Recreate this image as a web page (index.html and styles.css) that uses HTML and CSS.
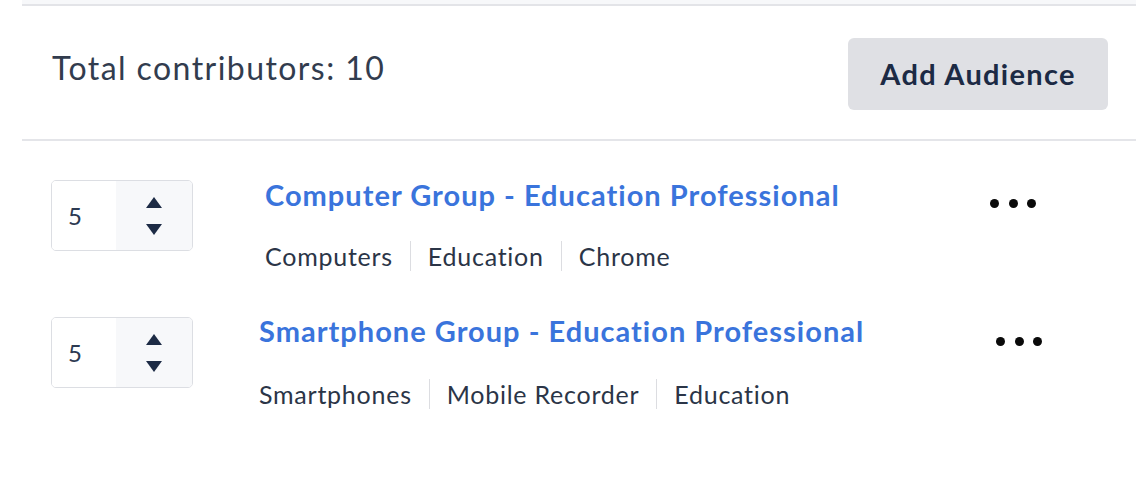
FILE: index.html
```html
<!DOCTYPE html>
<html lang="en">
<head>
<meta charset="utf-8">
<title>Audiences</title>
<link rel="stylesheet" href="styles.css">
</head>
<body>
<div class="panel">
  <div class="topband"></div>
  <div class="header">
    <div class="total">Total contributors: 10</div>
    <button class="add-btn" type="button">Add Audience</button>
  </div>
  <div class="list">
    <div class="row row--a">
      <div class="spinner">
        <div class="spinner-value">5</div>
        <div class="spinner-arrows">
          <svg width="16" height="38" viewBox="0 0 16 38" aria-hidden="true">
            <polygon points="8,0 16,11 0,11" fill="#1d2b45"/>
            <polygon points="0,27 16,27 8,38" fill="#1d2b45"/>
          </svg>
        </div>
      </div>
      <div class="content">
        <div class="title">Computer Group - Education Professional</div>
        <div class="tags">
          <span class="tag">Computers</span>
          <span class="tag">Education</span>
          <span class="tag">Chrome</span>
        </div>
      </div>
      <div class="dots"><span></span><span></span><span></span></div>
    </div>
    <div class="row row--b">
      <div class="spinner">
        <div class="spinner-value">5</div>
        <div class="spinner-arrows">
          <svg width="16" height="38" viewBox="0 0 16 38" aria-hidden="true">
            <polygon points="8,0 16,11 0,11" fill="#1d2b45"/>
            <polygon points="0,27 16,27 8,38" fill="#1d2b45"/>
          </svg>
        </div>
      </div>
      <div class="content">
        <div class="title">Smartphone Group - Education Professional</div>
        <div class="tags">
          <span class="tag">Smartphones</span>
          <span class="tag">Mobile Recorder</span>
          <span class="tag">Education</span>
        </div>
      </div>
      <div class="dots"><span></span><span></span><span></span></div>
    </div>
  </div>
</div>
</body>
</html>
```
FILE: styles.css
```css
* { box-sizing: border-box; }

html, body {
  margin: 0;
  padding: 0;
  background: #ffffff;
}

body {
  font-family: Lato, "Open Sans", sans-serif;
  color: #2e3849;
}

.panel {
  margin-left: 22px;
  width: 1114px;
}

.topband {
  height: 6px;
  background: #f7f8fa;
  border-bottom: 2px solid #e3e4e8;
}

.header {
  height: 135px;
  display: flex;
  align-items: center;
  justify-content: space-between;
  padding: 0 28px 0 30px;
  border-bottom: 2px solid #e4e5e9;
}

.total {
  font-size: 32px;
  font-weight: 400;
  color: #323c4e;
  letter-spacing: 0.045em;
  padding-bottom: 10px;
}

.add-btn {
  width: 260px;
  height: 72px;
  border: none;
  border-radius: 6px;
  background: #dfe0e4;
  color: #1c2a44;
  font-family: inherit;
  font-size: 29px;
  font-weight: 700;
  letter-spacing: 0.045em;
  padding: 0;
  margin-top: 2px;
}

.list {
  padding-top: 39px;
}

.row {
  display: grid;
  grid-template-columns: 142px 1fr auto;
  align-items: start;
  padding-left: 29px;
  height: 137px;
}

.row--a { column-gap: 72px; }
.row--b { column-gap: 66px; }
.row--a .dots { margin-right: 100px; margin-top: 19px; }
.row--b .dots { margin-right: 94px; margin-top: 20px; }

.spinner {
  display: flex;
  width: 142px;
  height: 71px;
  border: 1px solid #dcdee3;
  border-radius: 5px;
  overflow: hidden;
}

.spinner-value {
  width: 64px;
  background: #ffffff;
  display: flex;
  align-items: center;
  padding-left: 16px;
  font-size: 24px;
  color: #2c3a52;
}

.spinner-arrows {
  flex: 1;
  background: #f7f8fa;
  display: flex;
  align-items: center;
  justify-content: center;
}

.content {
  display: flex;
  flex-direction: column;
}

.title {
  font-size: 29px;
  font-weight: 700;
  color: #3a74dc;
  line-height: 34px;
  letter-spacing: 0.035em;
  margin-top: -2px;
}

.row--b .title { margin-top: -3px; }

.tags {
  display: flex;
  align-items: center;
  margin-top: 29px;
}

.row--b .tags { margin-top: 31px; }

.tag {
  font-size: 25px;
  line-height: 30px;
  color: #2b3547;
  letter-spacing: 0.03em;
  padding: 0 17px;
  border-left: 1px solid #dcdde1;
}

.tag:first-child {
  padding-left: 0;
  border-left: none;
}

.dots {
  display: flex;
  gap: 9.5px;
}

.dots span {
  width: 9px;
  height: 9px;
  border-radius: 50%;
  background: #0a0a0a;
}
```
